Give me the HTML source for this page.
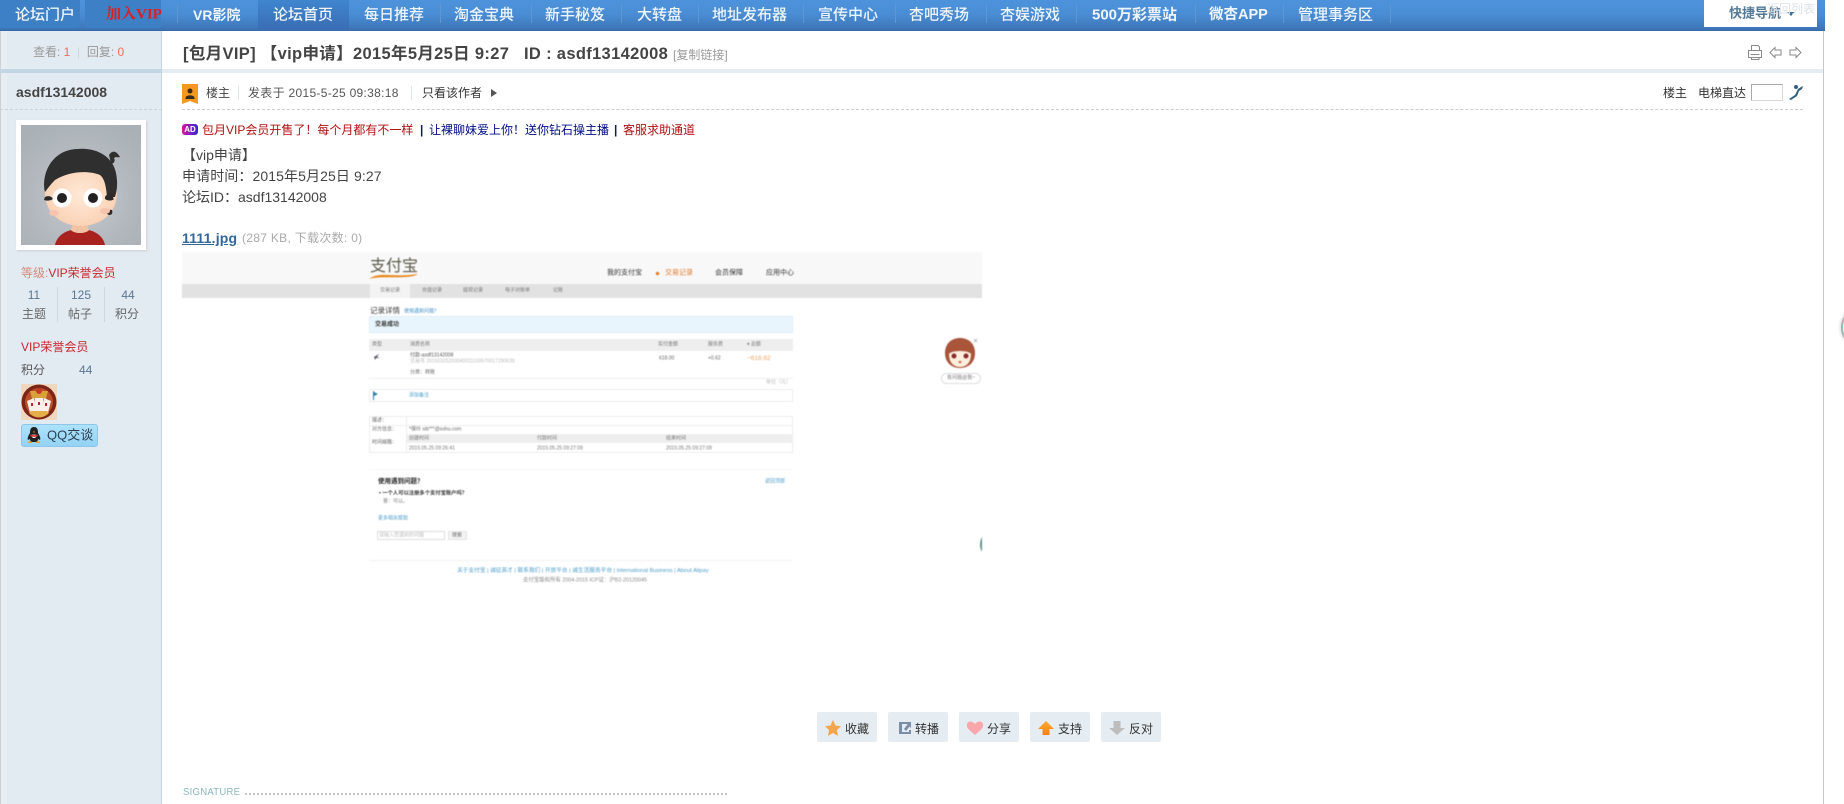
<!DOCTYPE html>
<html lang="zh"><head><meta charset="utf-8"><title>[包月VIP] 【vip申请】</title>
<style>
html,body{margin:0;padding:0;background:#fff}
#p{position:relative;width:1844px;height:804px;overflow:hidden;background:#fff;font-family:"Liberation Sans","Noto Sans CJK SC",sans-serif;font-size:12px;color:#444}
.t{position:absolute;white-space:nowrap;line-height:1;transform:translateY(-50%)}
.c{transform:translate(-50%,-50%)}
.b{position:absolute}
.n{font-size:15px;color:#eef5fc;font-weight:500;top:15px}
.s{position:absolute;top:4px;width:1px;height:19px;background:#5f97d3}
.btn{position:absolute;top:712px;height:30px;width:60px;background:#e5edf2;border-radius:2px}
.btn span{position:absolute;left:28px;top:10px;font-size:12px;line-height:15px;color:#333;white-space:nowrap}
.btn svg{position:absolute;left:7px;top:7px}
#m{position:absolute;left:182px;top:252px;width:800px;height:360px;overflow:hidden;filter:blur(.4px);color:#555}
#m .t{font-size:5px}
#m .r{position:absolute}
</style></head><body><div id="p">

<!-- nav -->
<div class="b" style="left:0;top:0;width:1825px;height:31px;background:linear-gradient(#4d93dc 0,#4a8dd4 45%,#3f78bb 90%,#386aa8 100%)"></div>
<div class="b" style="left:0;top:0;width:80px;height:28px;background:#3d80c6;border-radius:0 0 3px 0"></div>
<div class="b" style="left:85px;top:0;width:76px;height:28px;background:#3d80c6;border-radius:0 0 3px 3px"></div>
<div class="b" style="left:258px;top:0;width:91px;height:31px;background:linear-gradient(#3f86cf,#3a6cb4)"></div>
<div class="t n" style="left:15px">论坛门户</div>
<div class="t n" style="left:106px;color:#d92020;font-weight:700;font-size:15px;font-family:'Liberation Serif','Noto Serif CJK SC',serif">加入VIP</div>
<div class="s" style="left:177px"></div>
<div class="t n" style="left:193px;font-size:14px;font-weight:700">VR影院</div>
<div class="t n" style="left:273px">论坛首页</div>
<div class="t n" style="left:364px">每日推荐</div>
<div class="s" style="left:440px"></div>
<div class="t n" style="left:454px">淘金宝典</div>
<div class="s" style="left:531px"></div>
<div class="t n" style="left:545px">新手秘笈</div>
<div class="s" style="left:621px"></div>
<div class="t n" style="left:637px">大转盘</div>
<div class="s" style="left:698px"></div>
<div class="t n" style="left:712px">地址发布器</div>
<div class="s" style="left:803px"></div>
<div class="t n" style="left:818px">宣传中心</div>
<div class="s" style="left:895px"></div>
<div class="t n" style="left:909px">杏吧秀场</div>
<div class="s" style="left:986px"></div>
<div class="t n" style="left:1000px">杏娱游戏</div>
<div class="s" style="left:1076px"></div>
<div class="t n" style="left:1092px;font-weight:700;font-size:15px">500万彩票站</div>
<div class="s" style="left:1195px"></div>
<div class="t n" style="left:1209px;font-weight:700;font-size:14.500px">微杏APP</div>
<div class="s" style="left:1283px"></div>
<div class="t n" style="left:1298px">管理事务区</div>
<div class="s" style="left:1390px"></div>

<div class="b" style="left:1704px;top:0;width:113px;height:27px;background:#fff"></div>
<div class="t" style="left:1729px;top:13px;font-size:13px;font-weight:700;color:#557a96">快捷导航</div>
<div class="b" style="left:1787px;top:12px;border:4px solid transparent;border-top:4px solid #35709a;border-bottom:0"></div>
<div class="t" style="left:1767px;top:9px;font-size:12px;color:#dde3e8">返回列表</div>

<!-- sidebar -->
<div class="b" style="left:0;top:31px;width:161px;height:773px;background:#e3ebf2;border-right:1px solid #c2d5e3"></div>
<div class="b" style="left:0;top:31px;width:1px;height:773px;background:#c9d2d9"></div>
<div class="b" style="left:1px;top:31px;width:6px;height:773px;background:#e8edf1"></div>
<div class="b" style="left:0;top:69px;width:162px;height:4px;background:#c2d5e3"></div>
<div class="b" style="left:162px;top:69px;width:1661px;height:4px;background:#e5edf2"></div>
<div class="b" style="left:1823px;top:31px;width:1px;height:773px;background:#c8c8c8"></div>

<div class="t" style="left:33px;top:52px;color:#999">查看: <span style="color:#f26c4f">1</span><span style="color:#cdd5dc"> &nbsp;|&nbsp; </span>回复: <span style="color:#f26c4f">0</span></div>
<div class="t" style="left:16px;top:92px;font-size:14px;font-weight:700;color:#444">asdf13142008</div>
<div class="b" style="left:0;top:109px;width:162px;border-top:1px dashed #c9d3da"></div>

<div class="b" style="left:16px;top:120px;width:130px;height:130px;background:#fff;box-shadow:1px 1px 2px #c8ced3"></div>
<svg class="b" style="left:21px;top:125px" width="120" height="120" viewBox="0 0 120 120">
<defs><radialGradient id="g" cx=".5" cy=".6" r=".7"><stop offset="0" stop-color="#c6cbcf"/><stop offset=".6" stop-color="#b2b8bd"/><stop offset="1" stop-color="#a9b0b6"/></radialGradient>
<radialGradient id="sk" cx=".5" cy=".5" r=".6"><stop offset="0" stop-color="#ffe9d6"/><stop offset=".8" stop-color="#fad4b8"/><stop offset="1" stop-color="#eeb596"/></radialGradient></defs>
<rect width="120" height="120" fill="url(#g)"/>
<path d="M34 120C36 110 46 104 59 104S82 110 84 120Z" fill="#a82220"/>
<path d="M50 105C53 109 65 109 68 105L66 98H52Z" fill="#f2c2a5"/>
<path d="M24 68C24 48 40 38 60 38S96 48 96 68C96 88 80 101 60 101S24 88 24 68Z" fill="url(#sk)"/>
<path d="M24 67C20 50 30 25 56 24C76 22 92 32 95 48C97 58 96 66 94 72L86 72C85 62 84 54 79 50C70 46 50 45 34 55C30 59 27 63 24 67Z" fill="#2f2f30"/>
<path d="M88 30C92 24 96 27 99 32C97 33 95 31 93 33C95 36 92 40 90 38Z" fill="#2f2f30"/>
<path d="M84 72C88 66 95 68 92 73C95 75 88 77 84 74ZM24 72C28 70 31 72 32 74C29 76 26 76 23 75ZM88 90C91 90 92 88 91 85C89 84 86 86 86 89Z" fill="#2a2a2a"/>
<circle cx="41" cy="73" r="9.500" fill="#fff"/><circle cx="72" cy="73" r="9.500" fill="#fff"/>
<circle cx="41" cy="73" r="5" fill="#232323"/><circle cx="72" cy="73" r="5" fill="#232323"/>
<ellipse cx="33" cy="88" rx="5" ry="3" fill="#f7c2ae"/><ellipse cx="84" cy="86" rx="5" ry="3" fill="#f7c2ae"/>
</svg>

<div class="t" style="left:21px;top:273px;color:#c9292c"><span style="color:#d58a7c">等级:</span>VIP荣誉会员</div>
<div class="t c" style="left:34px;top:295px;color:#5c7590">11</div>
<div class="t c" style="left:81px;top:295px;color:#5c7590">125</div>
<div class="t c" style="left:128px;top:295px;color:#5c7590">44</div>
<div class="t c" style="left:34px;top:314px;color:#666">主题</div>
<div class="t c" style="left:80px;top:314px;color:#666">帖子</div>
<div class="t c" style="left:127px;top:314px;color:#666">积分</div>
<div class="b" style="left:57px;top:287px;width:1px;height:35px;background:#cfd8df"></div>
<div class="b" style="left:104px;top:287px;width:1px;height:35px;background:#cfd8df"></div>
<div class="t" style="left:21px;top:347px;color:#c9242a">VIP荣誉会员</div>
<div class="t" style="left:21px;top:370px;color:#555">积分</div>
<div class="t" style="left:79px;top:370px;color:#5c7590">44</div>

<svg class="b" style="left:21px;top:384px" width="36" height="36" viewBox="0 0 36 36">
<rect width="36" height="36" fill="#f0d8c0"/>
<circle cx="18" cy="18" r="17.500" fill="#7c2418"/><circle cx="18" cy="18" r="14" fill="#b94f26"/>
<path d="M9 7H27L25 15H11Z" fill="#d9a13b"/><circle cx="18" cy="7" r="3" fill="#c23a22"/>
<path d="M6 17L13 14L16 27L9 29ZM14 14H22V29H14ZM23 14L30 17L27 29L20 27Z" fill="#f7f0ea"/>
<path d="M10 19h2v3h-2ZM17 18h2v3h-2ZM24 19h2v3h-2Z" fill="#b8252a"/>
<path d="M8 29C14 35 22 35 28 29L26 27H10Z" fill="#e6ae48"/>
</svg>
<div class="b" style="left:21px;top:424px;width:75px;height:21px;background:linear-gradient(#aee2fb,#93d3f5);border:1px solid #8cc6ea;border-radius:3px"></div>
<svg class="b" style="left:26px;top:426px" width="16" height="18" viewBox="0 0 16 18">
<path d="M8 1C4.500 1 4 4 4 7C2.500 9.500 1 12 2 14L4 13C4 15 5 15.500 6 16H10C11 15.500 12 15 12 13L14 14C15 12 13.500 9.500 12 7C12 4 11.500 1 8 1Z" fill="#222"/>
<path d="M5 9C6 13 10 13 11 9C10 8.500 6 8.500 5 9Z" fill="#fff"/>
<path d="M5 8.500C7 9.500 9 9.500 11 8.500L12 10L8 11L4 10Z" fill="#e02a20"/>
<path d="M2.500 15.500C4 14.500 6 15.500 6.500 17H2ZM13.500 15.500C12 14.500 10 15.500 9.500 17H14Z" fill="#f29a1c"/>
<path d="M7 5.500L9 5.500L8 7Z" fill="#f2a51c"/>
</svg>
<div class="t" style="left:47px;top:435px;font-size:13px;color:#2c3e4c">QQ交谈</div>

<!-- title -->
<div class="t" style="left:183px;top:54px;font-size:16.500px;letter-spacing:.33px;font-weight:700;color:#444">[包月VIP] 【vip申请】2015年5月25日 9:27&nbsp;&nbsp; ID : asdf13142008</div>
<div class="t" style="left:673px;top:55px;color:#999">[复制链接]</div>
<svg class="b" style="left:1747px;top:44px" width="56" height="17" viewBox="0 0 56 17" fill="none" stroke="#8a8a8a">
<path d="M4.500 6.500V1.500H11L12.500 3V6.500M1.500 6.500H14.500V13.500H1.500ZM4.500 13.500V15.500H12V13.500M3.500 10.500H12.500"/>
<path d="M23 8.500L28 3.500V6H34V11H28V13.500Z"/>
<path d="M54 8.500L49 3.500V6H43V11H49V13.500Z"/>
</svg>

<!-- post info -->
<svg class="b" style="left:182px;top:84px" width="16" height="20" viewBox="0 0 16 20">
<path d="M0 0H16V20L8 17L0 20Z" fill="#f5981f"/>
<circle cx="8" cy="7" r="2.500" fill="#3a2a1c"/><path d="M3.500 14C3.500 10.500 12.500 10.500 12.500 14V15H3.500Z" fill="#3a2a1c"/>
</svg>
<div class="t" style="left:206px;top:93px;color:#444">楼主</div>
<div class="b" style="left:238px;top:86px;width:1px;height:14px;background:#dfe5e9"></div>
<div class="t" style="left:248px;top:93px;color:#555;letter-spacing:.3px">发表于 2015-5-25 09:38:18</div>
<div class="b" style="left:411px;top:86px;width:1px;height:14px;background:#dfe5e9"></div>
<div class="t" style="left:422px;top:93px;color:#333">只看该作者</div>
<div class="b" style="left:491px;top:89px;border:4px solid transparent;border-left:6px solid #555;border-right:0"></div>
<div class="t" style="left:1663px;top:93px;color:#333">楼主</div>
<div class="t" style="left:1698px;top:93px;color:#333">电梯直达</div>
<div class="b" style="left:1751px;top:84px;width:30px;height:15px;border:1px solid #d8d8d8;border-top-color:#aaa;border-left-color:#aaa;background:#fff"></div>
<svg class="b" style="left:1788px;top:84px" width="16" height="17" viewBox="0 0 16 17">
<path d="M1 15L7 11L10 5L13 3L15 2L14 5L11 7L9 12L3 16Z" fill="#33607f"/><circle cx="8" cy="3" r="2" fill="#33607f"/>
</svg>
<div class="b" style="left:182px;top:109px;width:1621px;border-top:1px dashed #cdcdcd"></div>

<!-- ad line -->
<div class="b" style="left:182px;top:124px;width:16px;height:11px;border-radius:3px;background:linear-gradient(90deg,#d41a9c,#3327d8);color:#fff;font-size:8px;line-height:11px;text-align:center;font-weight:700">AD</div>
<div class="t" style="left:202px;top:130px;color:#b01010">包月VIP会员开售了！每个月都有不一样</div>
<div class="t" style="left:420px;top:130px;color:#111c60;font-weight:700">|</div>
<div class="t" style="left:429px;top:130px;color:#000d88">让裸聊妹爱上你！送你钻石操主播</div>
<div class="t" style="left:614px;top:130px;color:#111c60;font-weight:700">|</div>
<div class="t" style="left:623px;top:130px;color:#b01010">客服求助通道</div>

<!-- body -->
<div class="t" style="left:182px;top:155px;font-size:14px;color:#444">【vip申请】</div>
<div class="t" style="left:182px;top:176px;font-size:14px;letter-spacing:.1px;color:#444">申请时间：2015年5月25日 9:27</div>
<div class="t" style="left:182px;top:197px;font-size:14px;color:#444">论坛ID：asdf13142008</div>
<div class="t" style="left:182px;top:238px;font-size:14px;letter-spacing:.2px;font-weight:700;color:#369;text-decoration:underline">1111.jpg</div>
<div class="t" style="left:242px;top:238px;color:#aaa;letter-spacing:.3px">(287 KB, 下载次数: 0)</div>

<!-- attached image -->
<div id="m">
<div class="r" style="left:0;top:0;width:800px;height:32px;background:#f8f8f8"></div>
<div class="r" style="left:0;top:32px;width:800px;height:14px;background:#e2e2e2"></div>
<div class="r" style="left:188px;top:32px;width:40px;height:14px;background:#f3f3f3"></div>
<div class="t" style="left:188px;top:15px;color:#5a5a4a"><span style="font-size:16px">支付宝</span></div>
<svg class="r" style="left:186px;top:18px" width="52" height="10" viewBox="0 0 52 10"><path d="M1 9C12 1 24 8 50 4C42 10 14 5 1 9Z" fill="#e8861c"/></svg>
<div class="t" style="left:425px;top:21px;color:#333"><span style="font-size:7px">我的支付宝</span></div>
<div class="r" style="left:474px;top:20px;width:3px;height:3px;background:#e8761c;transform:rotate(45deg)"></div>
<div class="t" style="left:483px;top:21px;color:#e07a2c"><span style="font-size:7px">交易记录</span></div>
<div class="t" style="left:533px;top:21px;color:#333"><span style="font-size:7px">会员保障</span></div>
<div class="t" style="left:584px;top:21px;color:#333"><span style="font-size:7px">应用中心</span></div>
<div class="t" style="left:198px;top:39px;color:#777">交易记录</div>
<div class="t" style="left:240px;top:39px;color:#777">充值记录</div>
<div class="t" style="left:281px;top:39px;color:#777">提现记录</div>
<div class="t" style="left:323px;top:39px;color:#777">电子对账单</div>
<div class="t" style="left:371px;top:39px;color:#777">记账</div>
<div class="t" style="left:188px;top:59px;color:#333"><span style="font-size:7.500px">记录详情</span></div>
<div class="t" style="left:222px;top:60px;color:#3d8fc4">使用遇到问题？</div>
<div class="r" style="left:187px;top:64px;width:424px;height:17px;background:#e8f5fc;box-sizing:border-box;border:1px solid #deeef7"></div>
<div class="t" style="left:193px;top:73px;color:#333;font-weight:700"><span style="font-size:6px">交易成功</span></div>
<div class="r" style="left:187px;top:87px;width:424px;height:12px;background:#eee"></div>
<div class="t" style="left:190px;top:93px;color:#777">类型</div>
<div class="t" style="left:228px;top:93px;color:#777">消费名称</div>
<div class="t" style="left:476px;top:93px;color:#777">实付金额</div>
<div class="t" style="left:526px;top:93px;color:#777">服务费</div>
<div class="t" style="left:565px;top:93px;color:#777">▾ 总额</div>
<svg class="r" style="left:191px;top:101px" width="8" height="8" viewBox="0 0 8 8"><path d="M1 4L6 1L4 4L7 5L3 5L2 7Z" fill="#556"/></svg>
<div class="t" style="left:228px;top:104px;color:#555">付款-asdf13142008</div>
<div class="t" style="left:228px;top:110px;color:#bbb">交易号 20150325200040011100670017290639</div>
<div class="t" style="left:477px;top:107px;color:#666">618.00</div>
<div class="t" style="left:526px;top:107px;color:#666">+0.62</div>
<div class="t" style="left:565px;top:107px;color:#eba563"><span style="font-size:6.500px">−618.62</span></div>
<div class="t" style="left:228px;top:121px;color:#666">分类：转账</div>
<div class="r" style="left:187px;top:126px;width:424px;height:1px;background:#eee"></div>
<div class="t" style="left:584px;top:131px;color:#bbb">单位（元）</div>
<div class="r" style="left:187px;top:137px;width:424px;height:13px;box-sizing:border-box;border:1px solid #ececec"></div>
<svg class="r" style="left:190px;top:139px" width="7" height="9" viewBox="0 0 7 9"><path d="M1 0H2V1L6 3L2 5V9H1Z" fill="#2d7cb0"/></svg>
<div class="t" style="left:227px;top:144px;color:#4a9cc8">添加备注</div>
<div class="r" style="left:187px;top:164px;width:424px;height:37px;box-sizing:border-box;border:1px solid #ececec"></div>
<div class="r" style="left:224px;top:164px;width:1px;height:37px;background:#ececec"></div>
<div class="r" style="left:187px;top:173px;width:424px;height:1px;background:#efefef"></div>
<div class="r" style="left:225px;top:182px;width:386px;height:9px;background:#eee"></div>
<div class="t" style="left:190px;top:169px;color:#666">描述：</div>
<div class="t" style="left:190px;top:178px;color:#666">对方信息：</div>
<div class="t" style="left:190px;top:191px;color:#666">时间線路：</div>
<div class="t" style="left:227px;top:178px;color:#666">*保玲 sib***@sohu.com</div>
<div class="t" style="left:227px;top:187px;color:#777">创建时间</div>
<div class="t" style="left:355px;top:187px;color:#777">付款时间</div>
<div class="t" style="left:484px;top:187px;color:#777">结束时间</div>
<div class="t" style="left:227px;top:197px;color:#777">2015.05.25 09:26:41</div>
<div class="t" style="left:355px;top:197px;color:#777">2015.05.25 09:27:09</div>
<div class="t" style="left:484px;top:197px;color:#777">2015.05.25 09:27:09</div>
<div class="r" style="left:187px;top:217px;width:424px;height:1px;background:#f7f7f7"></div>
<div class="t" style="left:196px;top:230px;color:#222;font-weight:700"><span style="font-size:6.500px">使用遇到问题？</span></div>
<div class="t" style="left:583px;top:230px;color:#4a9cc8">返回顶部</div>
<div class="t" style="left:197px;top:242px;color:#333;font-weight:700"><span style="font-size:5.300px">• 一个人可以注册多个支付宝账户吗？</span></div>
<div class="t" style="left:201px;top:250px;color:#777">答：可以。</div>
<div class="t" style="left:196px;top:267px;color:#4a9cc8">更多相关帮助</div>
<div class="r" style="left:195px;top:279px;width:68px;height:9px;box-sizing:border-box;border:1px solid #ddd;background:#fff"></div>
<div class="t" style="left:197px;top:284px;color:#bbb">请输入您遇到的问题</div>
<div class="r" style="left:266px;top:279px;width:19px;height:9px;box-sizing:border-box;border:1px solid #e4e4e4;background:#f4f4f4"></div>
<div class="t" style="left:270px;top:284px;color:#666">搜索</div>
<div class="r" style="left:187px;top:308px;width:424px;height:1px;background:#f3f3f3"></div>
<div class="t" style="left:275px;top:319.500px;color:#4a9cc8;font-size:5.700px">关于支付宝 | 诚征英才 | 联系我们 | 开放平台 | 诚生活服务平台 | International Business | About Alipay</div>
<div class="t" style="left:341px;top:329px;color:#888;font-size:5.400px">支付宝版权所有 2004-2015 ICP证：沪B2-20120045</div>
<!-- mascot -->
<svg class="r" style="left:762px;top:85px" width="34" height="33" viewBox="0 0 34 33">
<path d="M1 16C1 6 8 1 16 1S31 6 31 16C31 26 24 31 16 31S1 26 1 16Z" fill="#a9553a"/>
<path d="M5 17C7 13 25 13 27 17C27 26 22 30 16 30S5 26 5 17Z" fill="#fdeedd"/>
<circle cx="10" cy="19" r="2.500" fill="#8a2a2a"/><circle cx="22" cy="19" r="2.500" fill="#8a2a2a"/>
<circle cx="16" cy="25" r="1.300" fill="#d85a4a"/>
<path d="M30 2L33 5M33 2L30 5" stroke="#bbb"/>
</svg>
<div class="r" style="left:759px;top:121px;width:40px;height:11px;box-sizing:border-box;border:1px solid #ddd;border-radius:6px;background:#fff;text-align:center;font-size:5px;line-height:9px;color:#777">有问题@我~</div>
<div class="r" style="left:798px;top:285px;width:6px;height:15px;border-radius:50%;background:#5f8f8a"></div>
</div>

<!-- edge blob -->
<div class="b" style="left:1841px;top:313px;width:16px;height:27px;border-radius:50%;background:#fff;border:1px solid #aaa;box-shadow:inset 1px 0 1px #6fc0a8,-1px 0 3px #ddd"></div>

<!-- buttons -->
<div class="btn" style="left:817px"><svg width="18" height="18" viewBox="0 0 18 18"><path d="M9 1L11.500 6.500L17 7.200L13 11L14 17L9 14L4 17L5 11L1 7.200L6.500 6.500Z" fill="#f4a64e"/></svg><span>收藏</span></div>
<div class="btn" style="left:888px"><svg width="18" height="18" viewBox="0 0 18 18" style="left:9px"><path d="M2 3H14V6H12V5H5V13H12V11H14V15H2Z" fill="#7b8ea8"/><path d="M9 4H14V9L12.500 7.500L9 12L7 10L10.500 5.500Z" fill="#7b8ea8"/></svg><span style="left:27px">转播</span></div>
<div class="btn" style="left:959px"><svg width="18" height="18" viewBox="0 0 18 18" style="left:7px"><path d="M9 16C3 11 0 8.500 1 5C2 2 6 1.500 9 5C12 1.500 16 2 17 5C18 8.500 15 11 9 16Z" fill="#f8a8ad"/></svg><span>分享</span></div>
<div class="btn" style="left:1030px"><svg width="18" height="18" viewBox="0 0 18 18"><defs><linearGradient id="o" x1="0" y1="0" x2="0" y2="1"><stop offset="0" stop-color="#fbab2a"/><stop offset="1" stop-color="#f5801c"/></linearGradient></defs><path d="M9 2L17 10H12.500V16H5.500V10H1Z" fill="url(#o)"/></svg><span>支持</span></div>
<div class="btn" style="left:1101px"><svg width="18" height="18" viewBox="0 0 18 18"><path d="M9 16L17 9H12.500V2H5.500V9H1Z" fill="#bdbdbd"/></svg><span>反对</span></div>

<!-- signature -->
<div class="t" style="left:183px;top:793px;font-size:10px;font-weight:400;color:#8cb8bc;letter-spacing:.3px;transform:translateY(-50%) scaleX(.95);transform-origin:left">SIGNATURE</div>
<div class="b" style="left:245px;top:793px;width:482px;height:2px;background:repeating-linear-gradient(90deg,#c4c4c4 0 2px,#fff 2px 4px)"></div>
</div></body></html>
